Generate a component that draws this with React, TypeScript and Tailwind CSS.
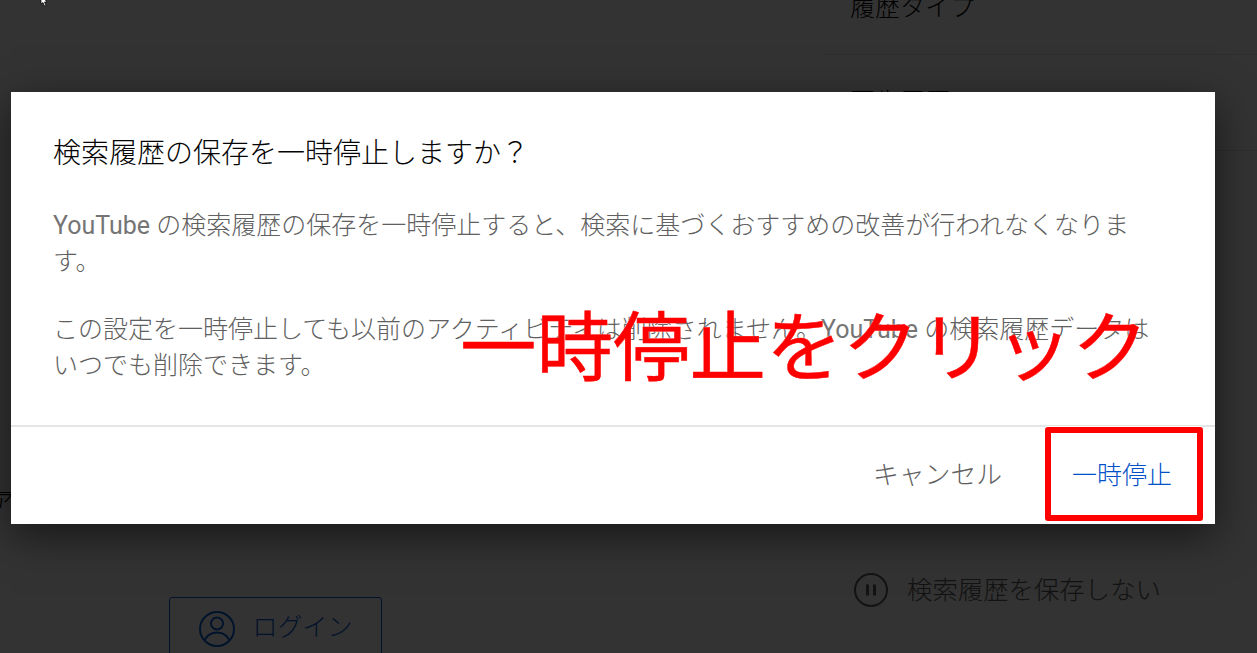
import React from 'react';

const jpFont = "font-['Roboto','Noto_Sans_CJK_JP',sans-serif]";

const App: React.FC = () => {
    return (
        <div className={`relative h-[653px] w-[1257px] overflow-hidden bg-white text-[#030303] ${jpFont}`}>
            {/* Page behind the dialog */}
            <div className="flex h-full">
                <div className="flex w-[822px] shrink-0 flex-col">
                    <div className="mt-[492px] h-[20px] w-[11px] shrink-0 overflow-hidden border-t border-[#030303] text-[25px] font-light leading-[22px]">
                        <span className="ml-[-11px] whitespace-nowrap">ア</span>
                    </div>
                    <button className="ml-[169px] mt-[85px] flex h-[72px] w-[213px] shrink-0 items-start justify-center gap-[16px] rounded-[3px] border border-[#065fd4] pt-[12px] text-[25px] font-light leading-[36px] text-[#065fd4]">
                        <svg width="38" height="38" viewBox="0 0 38 38" fill="none" stroke="currentColor" strokeWidth="2" className="shrink-0">
                            <circle cx="19" cy="19" r="17" />
                            <circle cx="19" cy="13.5" r="6" />
                            <path d="M6.5 30 C10 24 14 22.5 19 22.5 C24 22.5 28 24 31.5 30" />
                        </svg>
                        <span>ログイン</span>
                    </button>
                </div>
                <div className="flex flex-1 flex-col">
                    <div className="h-[55px] border-b border-[#e5e5e5] pl-[28px] text-[25px] font-light leading-[16px]">履歴タイプ</div>
                    <div className="h-[96px] border-b border-[#e5e5e5] pl-[28px] pt-[30px] text-[25px] font-light leading-[36px]">再生履歴</div>
                    <div className="ml-[32px] mt-[421px] flex items-center gap-[19px] text-[25.4px] font-light leading-[36px] text-[#606060]">
                        <svg width="34" height="34" viewBox="0 0 34 34" fill="none" stroke="#606060" strokeWidth="2">
                            <circle cx="17" cy="17" r="16" />
                            <path d="M13.5 11.5v11M20.5 11.5v11" strokeWidth="3" />
                        </svg>
                        <span>検索履歴を保存しない</span>
                    </div>
                </div>
            </div>

            {/* Scrim */}
            <div className="absolute inset-0 bg-black/80" />

            {/* Mouse pointer at the top edge */}
            <svg className="absolute left-[40px] top-0" width="10" height="7" viewBox="0 0 10 7">
                <path d="M1 -5 L1 4 L3 2.5 L4.5 6 L6 5.5 L4.5 2 L7 2 Z" fill="#fff" stroke="#000" strokeWidth="0.7" />
            </svg>

            {/* Dialog */}
            <div className="absolute left-[11px] top-[92px] flex h-[432px] w-[1204px] flex-col bg-white shadow-[0_12px_40px_rgba(0,0,0,0.55)]">
                <div className="flex-1 px-[42px] pt-[42px]">
                    <h2 className="text-[28px] font-light leading-[40px] text-[#030303]">検索履歴の保存を一時停止しますか？</h2>
                    <div className="mt-[34px] w-[1098px] text-[25px] font-light leading-[36px] text-[#606060]">
                        <p><span className="font-normal text-[#757575]">YouTube</span> の検索履歴の保存を一時停止すると、検索に基づくおすすめの改善が行われなくなります。</p>
                        <p className="mt-[32px]">この設定を一時停止しても以前のアクティビティは削除されません。<span className="font-normal text-[#757575]">YouTube</span> の検索履歴データはいつでも削除できます。</p>
                    </div>
                </div>
                <div className="flex h-[99px] shrink-0 items-center justify-end gap-[70px] border-t-2 border-[#e5e5e5] pr-[43px] font-light">
                    <button className="text-[25.8px] text-[#606060]">キャンセル</button>
                    <button className="text-[25px] text-[#0050c8]">一時停止</button>
                </div>
            </div>

            {/* Red annotation */}
            <div className="absolute left-[460px] top-[299px] whitespace-nowrap text-[76.5px] leading-[100px] text-[#ff0000] [-webkit-text-stroke:0.5px_#ff0000] [text-shadow:0_0_2px_#fff]">
                一時停止をクリック
            </div>
            <div className="absolute left-[1045px] top-[427px] h-[94px] w-[158px] rounded-[3px] border-[6px] border-[#ff0000] shadow-[0_0_0_1px_#fff]" />
        </div>
    );
};

export default App;
